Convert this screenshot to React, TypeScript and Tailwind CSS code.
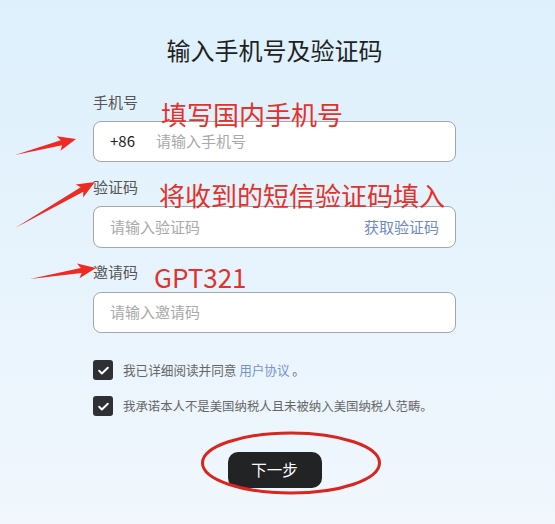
import React from "react";

function Arrow({ x1, y1, x2, y2 }: { x1: number; y1: number; x2: number; y2: number }) {
  const dx = x2 - x1;
  const dy = y2 - y1;
  const L = Math.sqrt(dx * dx + dy * dy);
  const ang = (Math.atan2(dy, dx) * 180) / Math.PI;
  const pts = `0,0 ${L - 15},-2.6 ${L - 18},-7.5 ${L},0 ${L - 18},7.5 ${L - 15},2.6`;
  return (
    <g transform={`translate(${x1} ${y1}) rotate(${ang})`}>
      <polygon points={pts} fill="#ee2a22" />
    </g>
  );
}

function Check() {
  return (
    <span className="flex h-[20px] w-[20px] shrink-0 items-center justify-center rounded-[3px] bg-[#2f3033]">
      <svg width="13" height="13" viewBox="0 0 24 24" fill="none" stroke="#fff" strokeWidth="3.6" strokeLinecap="round" strokeLinejoin="round">
        <path d="M4 12.5l5 5L20 7" />
      </svg>
    </span>
  );
}

export default function App() {
  const font = { fontFamily: '"Noto Sans CJK SC", "Noto Sans", sans-serif' };
  return (
    <div
      className="relative h-[524px] w-[555px] overflow-hidden bg-gradient-to-b from-[#ddf0fc] to-[#f1f7fd]"
      style={font}
    >
      <div className="ml-[93px] flex w-[363px] flex-col pt-[34px]">
        <h1 className="text-center text-[24px] leading-[32px] font-normal text-[#1f1f1f]">输入手机号及验证码</h1>

        <div className="mt-[26px] text-[15px] leading-[20px] text-[#555]">手机号</div>
        <div className="mt-[9px] flex h-[41px] items-center rounded-[8px] border border-[#a3a6ab] bg-white px-[16px]">
          <span className="text-[15px] text-[#222]">+86</span>
          <span className="ml-[21px] text-[15px] text-[#a9a9a9]">请输入手机号</span>
        </div>

        <div className="mt-[15px] text-[15px] leading-[20px] text-[#555]">验证码</div>
        <div className="mt-[9px] flex h-[42px] items-center justify-between rounded-[8px] border border-[#a3a6ab] bg-white px-[16px]">
          <span className="text-[15px] text-[#a9a9a9]">请输入验证码</span>
          <span className="text-[15px] text-[#7088c4]">获取验证码</span>
        </div>

        <div className="mt-[14px] text-[15px] leading-[20px] text-[#555]">邀请码</div>
        <div className="mt-[10px] flex h-[41px] items-center rounded-[8px] border border-[#a3a6ab] bg-white px-[16px]">
          <span className="text-[15px] text-[#a9a9a9]">请输入邀请码</span>
        </div>

        <div className="mt-[27px] flex items-center gap-[10px] text-[12.6px] text-[#666]">
          <Check />
          <span>
            我已详细阅读并同意 <span className="text-[#7392d0]">用户协议</span> 。
          </span>
        </div>
        <div className="mt-[16px] flex items-center gap-[10px] text-[12.4px] text-[#666]">
          <Check />
          <span className="whitespace-nowrap">我承诺本人不是美国纳税人且未被纳入美国纳税人范畴。</span>
        </div>

        <div className="mt-[36px] flex justify-center">
          <button className="h-[36px] w-[94px] rounded-[10px] bg-[#222325] text-[15.5px] text-white">下一步</button>
        </div>
      </div>

      {/* annotations */}
      <div className="absolute left-[161px] top-[97px] text-[26px] leading-[34px] text-[#e3322c]">填写国内手机号</div>
      <div className="absolute left-[159px] top-[178px] text-[26px] leading-[34px] text-[#e3322c]">将收到的短信验证码填入</div>
      <div className="absolute left-[154px] top-[260px] text-[26px] leading-[34px] text-[#e3322c]">GPT321</div>

      <svg className="absolute left-0 top-0" width="555" height="524" viewBox="0 0 555 524">
        <Arrow x1={15} y1={155} x2={76} y2={139} />
        <Arrow x1={15} y1={228} x2={95} y2={182} />
        <Arrow x1={30} y1={279} x2={96} y2={268} />
        <ellipse cx="291" cy="463" rx="88.5" ry="30" fill="none" stroke="#d9261f" strokeWidth="3" />
      </svg>
    </div>
  );
}
